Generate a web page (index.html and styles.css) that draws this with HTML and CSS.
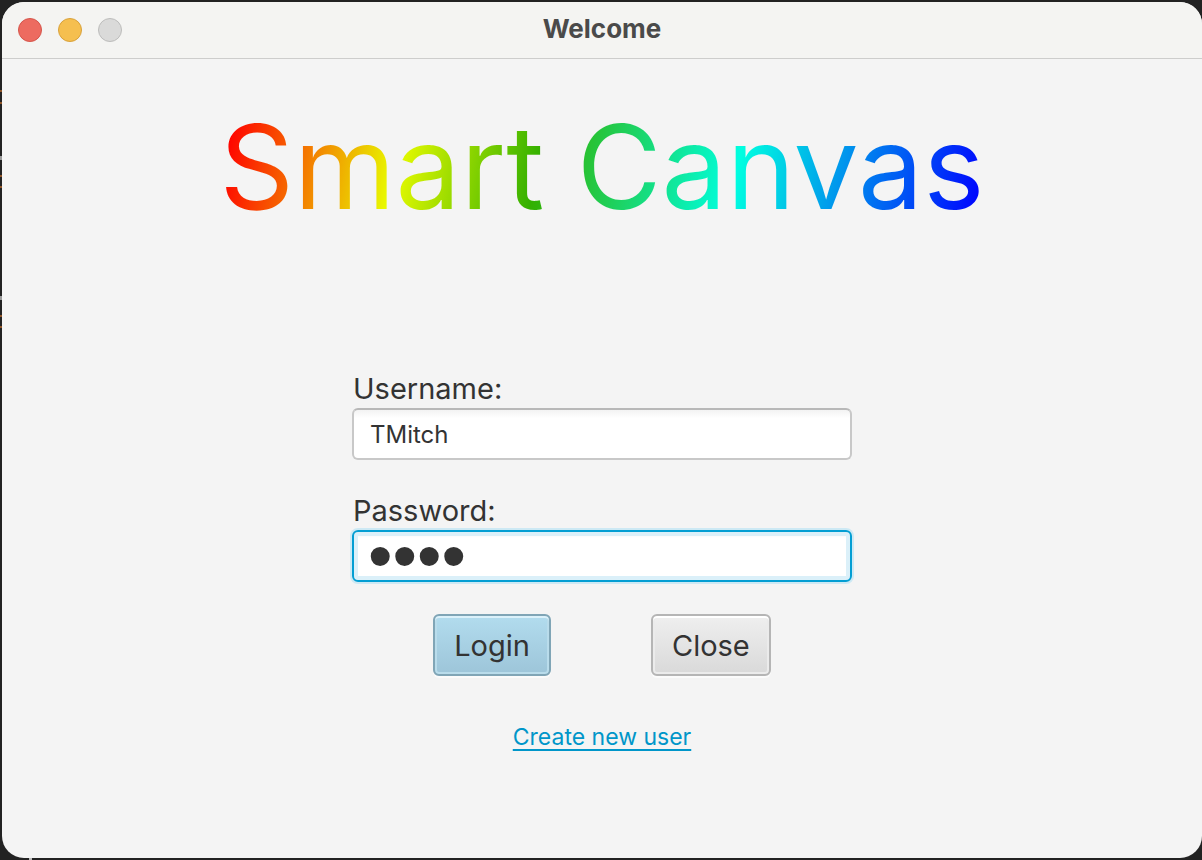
FILE: index.html
```html
<!DOCTYPE html>
<html lang="en">
<head>
<meta charset="utf-8">
<title>Welcome</title>
<link rel="stylesheet" href="styles.css">
</head>
<body>
<div class="window">
  <header class="titlebar">
    <div class="lights">
      <button class="light light-close" type="button" aria-label="Close window"></button>
      <button class="light light-minimize" type="button" aria-label="Minimize window"></button>
      <button class="light light-zoom" type="button" aria-label="Zoom window" disabled></button>
    </div>
    <div class="window-title">Welcome</div>
  </header>
  <main class="content">
    <h1 class="brand">Smart Canvas</h1>
    <form class="login">
      <div class="field">
        <label for="username">Username:</label>
        <input class="text-input" id="username" type="text" value="TMitch">
      </div>
      <div class="field">
        <label for="password">Password:</label>
        <input class="text-input focused" id="password" type="password" value="abcd">
      </div>
      <div class="actions">
        <button class="button button-default" type="submit">Login</button>
        <button class="button" type="button">Close</button>
      </div>
      <a class="link" href="#">Create new user</a>
    </form>
  </main>
</div>
</body>
</html>
```
FILE: styles.css
```css
* {
  box-sizing: border-box;
}

body {
  margin: 0;
  min-height: 100vh;
  padding: 2px 0 2px 2px;
  display: flex;
  background-color: #222;
  background-image:
    linear-gradient(#8f5426, #8f5426),
    linear-gradient(#8f5426, #8f5426),
    linear-gradient(#999, #999),
    linear-gradient(#8f5426, #8f5426),
    linear-gradient(#8f5426, #8f5426),
    linear-gradient(#999, #999),
    linear-gradient(#8f5426, #8f5426),
    linear-gradient(#8f5426, #8f5426),
    linear-gradient(#bbb, #bbb);
  background-repeat: no-repeat;
  background-size: 2px 2px, 2px 2px, 2px 4px, 2px 2px, 2px 2px, 2px 4px, 2px 2px, 2px 2px, 3px 2px;
  background-position: 0 90px, 0 102px, 0 156px, 0 175px, 0 186px, 0 296px, 0 315px, 0 326px, 29px 100%;
  font-family: Inter, "Liberation Sans", sans-serif;
  color: #333;
}

.window {
  flex: 1;
  display: flex;
  flex-direction: column;
  border-radius: 22px;
  overflow: hidden;
  background: #f4f4f4;
}

.titlebar {
  display: grid;
  grid-template-columns: 1fr auto 1fr;
  align-items: center;
  height: 57px;
  padding: 0 16px;
  border-bottom: 1px solid #cdcdcc;
  background: #f4f4f2;
}

.lights {
  display: flex;
  gap: 16px;
}

.light {
  width: 24px;
  height: 24px;
  padding: 0;
  border: 1px solid;
  border-radius: 50%;
}

.light-close {
  background: #ed6b60;
  border-color: #d5554b;
}

.light-minimize {
  background: #f5bf4f;
  border-color: #d8a13c;
}

.light-zoom {
  background: #dadad9;
  border-color: #bcbcbb;
}

.window-title {
  padding-bottom: 2px;
  font-size: 26px;
  line-height: 32px;
  font-weight: 700;
  color: #4a4a4a;
}

.content {
  display: flex;
  flex-direction: column;
  align-items: center;
  padding: 32px 24px;
}

.brand {
  margin: 0 0 127px;
  font-size: 116px;
  line-height: 152px;
  font-weight: 400;
  text-align: center;
  color: transparent;
  background: linear-gradient(102deg, #f00 2%, #e8fb00 24%, #33b000 42%, #00ffe0 67%, #00f 99%);
  -webkit-background-clip: text;
  background-clip: text;
}

.login {
  display: flex;
  flex-direction: column;
  width: 100%;
  max-width: 500px;
}

.field {
  display: flex;
  flex-direction: column;
  margin-bottom: 32px;
}

.field label {
  font-size: 29px;
  line-height: 38px;
  padding: 0 1px;
}

.text-input {
  width: 100%;
  height: 52px;
  padding: 0 16px;
  border: 2px solid #c8c8c8;
  border-top-color: #b8b8b8;
  border-radius: 6px;
  background: linear-gradient(#f3f3f3, #fff 8px);
  font-family: inherit;
  font-size: 24px;
  color: #333;
  outline: none;
}

.text-input.focused {
  border-color: #039ed3;
  background: linear-gradient(#f3f3f3, #fff 6px) padding-box;
  box-shadow: 0 0 0 2px #cde9f4, inset 0 0 0 4px #dbf0f9;
}

.text-input[type="password"] {
  padding: 0 14px;
  font-family: "Liberation Sans", Arial, sans-serif;
  font-size: 70px;
  line-height: 48px;
}

.actions {
  display: flex;
  justify-content: center;
  gap: 100px;
}

.button {
  height: 62px;
  padding: 0 19px;
  border: 2px solid #b5b5b5;
  border-radius: 6px;
  background: linear-gradient(#efefef, #d9d9d9);
  box-shadow: 0 2px 0 #fbfbfb, inset 0 2px 0 #fff, inset 0 0 0 2px #ebebeb;
  font-family: inherit;
  font-size: 29px;
  color: #333;
}

.button-default {
  border-color: #80a5b6;
  background: linear-gradient(#b2dcee, #9dc5d9);
  box-shadow: 0 2px 0 #fbfbfb, inset 0 2px 0 #dbf1fa, inset 0 0 0 2px #b9dceb;
}

.link {
  align-self: center;
  margin-top: 44px;
  font-size: 23px;
  line-height: 34px;
  color: #0096c9;
  text-decoration-thickness: 2px;
  text-underline-offset: 4px;
  text-decoration-skip-ink: none;
}
```
